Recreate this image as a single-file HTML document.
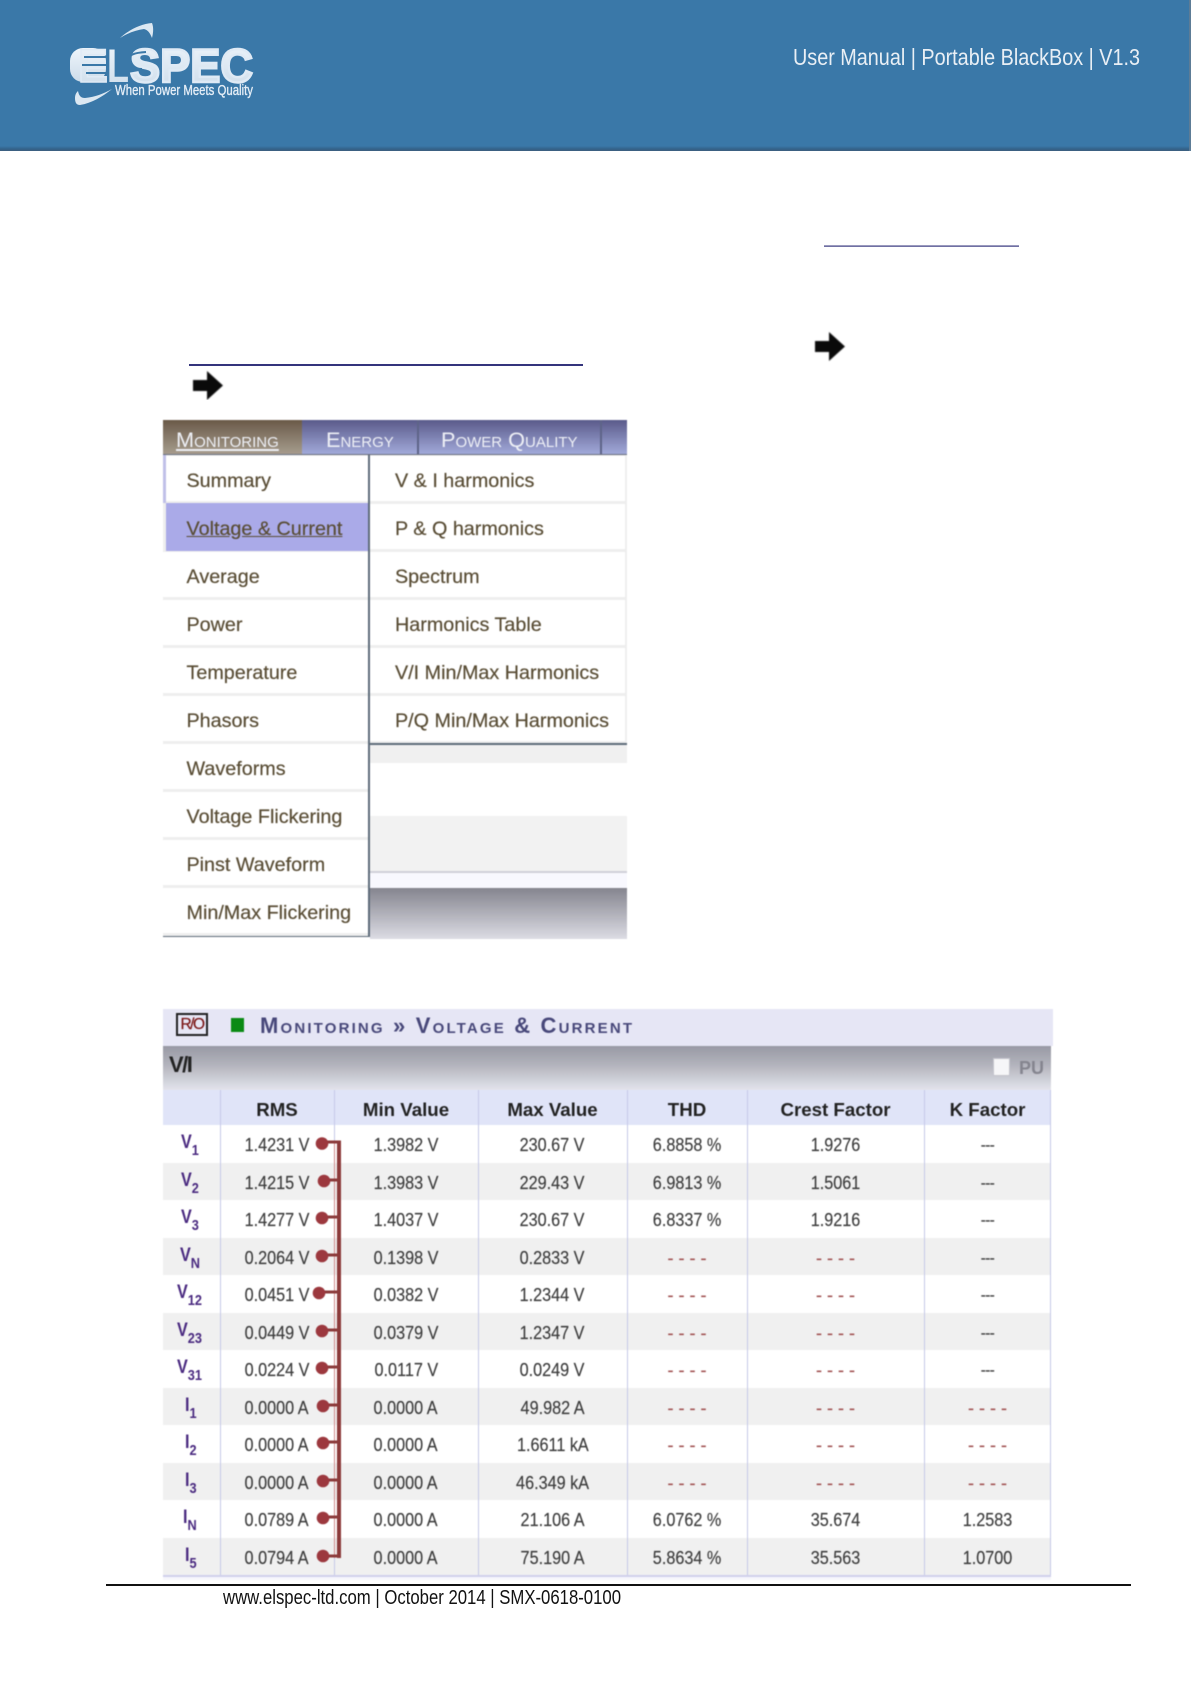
<!DOCTYPE html>
<html><head><meta charset="utf-8"><title>Elspec User Manual</title>
<style>
html,body{margin:0;padding:0;background:#fff}
#p{position:relative;width:1191px;height:1684px;overflow:hidden;background:#fff;font-family:"Liberation Sans",sans-serif}
.a{position:absolute}
svg{position:absolute;left:0;top:0}
#menu{position:absolute;left:0;top:0;width:1191px;height:960px;filter:blur(.55px)}
.tab{position:absolute;top:420px;height:35px;line-height:40px;font-size:21.7px;font-variant:small-caps;color:#eef0f6;white-space:nowrap}
.m{position:absolute;height:45px;line-height:50px;font-size:19.75px;color:#594d35;-webkit-text-stroke:.2px #594d35;background:#fff;white-space:nowrap;box-sizing:border-box;border-bottom:0}
.l{left:163px;width:205px;padding-left:23.5px}
.s{left:370px;width:255px;padding-left:25px}
#tbl{position:absolute;left:0;top:0;width:1191px;height:1582px;filter:blur(.5px)}
.r{position:absolute;left:163px;width:888px;height:37.5px;display:flex;line-height:41px;font-size:18px;color:#3c3c3c;-webkit-text-stroke:.15px #3c3c3c}
.r.e{background:#f0f0f0}
.r>div{text-align:center;flex:none;white-space:nowrap}
.r>div:nth-child(1){width:57px}
.r>div:nth-child(2){width:114px}
.r>div:nth-child(3){width:144px}
.r>div:nth-child(4){width:149px}
.r>div:nth-child(5){width:120px}
.r>div:nth-child(6){width:177px}
.r>div:nth-child(7){width:127px}
.r span{display:inline-block;transform:scaleX(.9)}
.r .n{font-weight:bold;font-size:19px;color:#4a2a80;-webkit-text-stroke:0;line-height:36px}
.r .n em{display:inline-block;font-style:normal;transform:scaleX(.85);transform-origin:0 50%}
.r .n sub{font-size:15px;line-height:0;vertical-align:-7px}
.d{color:#a05050;-webkit-text-stroke:.15px #a05050;font-size:18px;line-height:41px}
.k{font-size:15px;letter-spacing:-.5px;line-height:42px;color:#333}
.h{position:absolute;left:163px;top:1090px;width:888px;height:35px;display:flex;background:#e0e4f8;font-weight:bold;font-size:18.7px;line-height:39px;color:#222}
.h>div{text-align:center;flex:none}
.h>div:nth-child(1){width:57px}.h>div:nth-child(2){width:114px}.h>div:nth-child(3){width:144px}.h>div:nth-child(4){width:149px}.h>div:nth-child(5){width:120px}.h>div:nth-child(6){width:177px}.h>div:nth-child(7){width:127px}
.v{position:absolute;top:1090px;width:1.2px;height:486px;background:#c6c8e8}
</style></head><body>
<div id="p">

<!-- Header -->
<div class="a" style="left:0;top:0;width:1191px;height:151px;background:linear-gradient(#3a78a8 0,#3a78a8 146px,#33628a 149px,#3d5f7e 151px)"></div>
<div class="a" style="left:1189px;top:0;width:2px;height:151px;background:#5d7c96"></div>
<svg width="1191" height="400" viewBox="0 0 1191 400">
 <defs><linearGradient id="lg" x1="0" y1="0" x2="0" y2="1"><stop offset="0" stop-color="#eef5fb"/><stop offset="1" stop-color="#cddcea"/></linearGradient></defs>
 <path d="M120 38C130 29 141 24 152 23C154 28 153 34 152 38C150 33 148 30 144 29C136 30 128 33 120 38Z" fill="#dce8f2"/>
 <path d="M112 89C102 97 92 103 80 105C76 105 75 102 75 98C75 95 76 93 78 91C79 96 81 98 85 98C95 97 103 94 112 89Z" fill="#dce8f2"/>
 <rect x="70" y="48" width="36" height="34" rx="13" fill="url(#lg)"/>
 <text x="78" y="82" font-family="Liberation Sans" font-weight="bold" font-size="47" fill="url(#lg)" stroke="#dfeaf5" stroke-width="1.5" textLength="30" lengthAdjust="spacingAndGlyphs">E</text>
 <text x="107" y="82" font-family="Liberation Sans" font-weight="bold" font-size="47" fill="url(#lg)" textLength="22" lengthAdjust="spacingAndGlyphs">L</text>
 <text x="130" y="82" font-family="Liberation Sans" font-weight="bold" font-size="47" fill="url(#lg)" stroke="#dfeaf5" stroke-width="2.4" textLength="123" lengthAdjust="spacingAndGlyphs">SPEC</text>
 <path d="M84 57H108M82 65H108M86 73H108" stroke="#3a78a8" stroke-width="2" fill="none"/>
 <path d="M128 60Q128 53 146 52M128 62Q130 69 142 69" stroke="#3a78a8" stroke-width="2" fill="none"/>
 <text x="115" y="95" font-family="Liberation Sans" font-size="14.5" fill="#e4edf6" stroke="#e4edf6" stroke-width=".35" textLength="138" lengthAdjust="spacingAndGlyphs">When Power Meets Quality</text>
 <text x="793" y="65" font-family="Liberation Sans" font-size="23" fill="#e9eff5" textLength="347" lengthAdjust="spacingAndGlyphs">User Manual | Portable BlackBox | V1.3</text>
 <rect x="824" y="245.5" width="195" height="1.2" fill="#34347c"/>
 <rect x="189" y="364" width="394" height="2" fill="#34347c"/>
 <g style="filter:blur(.7px)">
  <path d="M815 341H829V332L845 346.500L829 361V352H815Z" fill="#0a0a0a"/>
  <path d="M193 380H207V371L223 385.500L207 400V391H193Z" fill="#0a0a0a"/>
 </g>
</svg>

<!-- Menu -->
<div id="menu">
 <div class="a" style="left:163px;top:420px;width:464px;height:35px;background:linear-gradient(#5a5a8a,#a4acdc)"></div>
 <div class="a" style="left:163px;top:420px;width:139px;height:35px;background:linear-gradient(#6a5a48,#a89e90)"></div>
 <div class="a" style="left:417px;top:420px;width:1.5px;height:35px;background:#5e6488"></div>
 <div class="a" style="left:600px;top:420px;width:1.5px;height:35px;background:#5e6488"></div>
 <div class="a" style="left:163px;top:454px;width:464px;height:1.5px;background:#6a7080"></div>
 <div class="tab" style="left:176px;text-decoration:underline">Monitoring</div>
 <div class="tab" style="left:326px">Energy</div>
 <div class="tab" style="left:441px">Power Quality</div>

 <!-- background of right part -->
 <div class="a" style="left:370px;top:455px;width:257px;height:289px;background:#eee"></div>
 <div class="a" style="left:370px;top:744px;width:257px;height:19px;background:#f0f0f0"></div>
 <div class="a" style="left:370px;top:816px;width:257px;height:55px;background:#f2f2f2"></div>
 <div class="a" style="left:370px;top:871px;width:257px;height:1.5px;background:#d0d0d8"></div>
 <div class="a" style="left:370px;top:873px;width:257px;height:15px;background:#f8f8fe"></div>
 <div class="a" style="left:370px;top:888px;width:257px;height:51px;background:linear-gradient(#85858f,#dcdce4)"></div>
 <!-- left column bg -->
 <div class="a" style="left:163px;top:455px;width:205px;height:481px;background:#eee"></div>
 <div class="a" style="left:163px;top:455px;width:3px;height:48px;background:#c0c0e8"></div>

 <div class="m l" style="top:456px;left:166px;width:202px;padding-left:20.500px">Summary</div>
 <div class="m l" style="top:503px;left:166px;width:202px;height:48px;padding-left:20.500px;line-height:52px;background:#aaaae8;text-decoration:underline">Voltage &amp; Current</div>
 <div class="m l" style="top:552px">Average</div>
 <div class="m l" style="top:600px">Power</div>
 <div class="m l" style="top:648px">Temperature</div>
 <div class="m l" style="top:696px">Phasors</div>
 <div class="m l" style="top:744px">Waveforms</div>
 <div class="m l" style="top:792px">Voltage Flickering</div>
 <div class="m l" style="top:840px">Pinst Waveform</div>
 <div class="m l" style="top:888px">Min/Max Flickering</div>

 <div class="m s" style="top:456px">V &amp; I harmonics</div>
 <div class="m s" style="top:504px">P &amp; Q harmonics</div>
 <div class="m s" style="top:552px">Spectrum</div>
 <div class="m s" style="top:600px">Harmonics Table</div>
 <div class="m s" style="top:648px">V/I Min/Max Harmonics</div>
 <div class="m s" style="top:696px">P/Q Min/Max Harmonics</div>

 <div class="a" style="left:368px;top:455px;width:2px;height:482px;background:#5e6c7a"></div>
 <div class="a" style="left:163px;top:935.500px;width:207px;height:1.500px;background:#5e6c7a"></div>
 <div class="a" style="left:370px;top:743px;width:257px;height:2px;background:#5e6c7a"></div>
</div>

<!-- Table -->
<div id="tbl">
 <div class="a" style="left:163px;top:1009px;width:890px;height:37px;background:#e6e6f5"></div>
 <div class="a" style="left:176px;top:1013px;width:28px;height:19px;border:2px solid #222;text-align:center;line-height:19px;font-size:15.5px;letter-spacing:-1.5px;color:#7a1414;-webkit-text-stroke:.2px #7a1414">R/O</div>
 <div class="a" style="left:231px;top:1018px;width:12.500px;height:14px;background:#0a8a14"></div>
 <svg width="1191" height="1100" viewBox="0 0 1191 1100"><text x="260" y="1033" font-family="Liberation Sans" font-weight="bold" font-size="22" fill="#48487a" style="font-variant:small-caps" textLength="372" lengthAdjust="spacing">Monitoring » Voltage &amp; Current</text></svg>
 <div class="a" style="left:163px;top:1046px;width:888px;height:44px;background:linear-gradient(#9899a4,#b4b5be 45%,#e4e4ec)"></div>
 <div class="a" style="left:169px;top:1052px;font-weight:bold;font-size:22px;letter-spacing:-1.5px;line-height:26px;color:#222">V/I</div>
 <div class="a" style="left:993px;top:1058px;width:15px;height:16px;background:#f6f6f8;border:.5px solid #c4c4cc"></div>
 <div class="a" style="left:1019px;top:1057px;font-weight:bold;font-size:18px;line-height:22px;color:#85858f">PU</div>

 <div class="h"><div></div><div>RMS</div><div>Min Value</div><div>Max Value</div><div>THD</div><div>Crest Factor</div><div>K Factor</div></div>

 <div class="r" style="top:1125px"><div class="n"><em>V<sub>1</sub></em></div><div><span>1.4231 V</span></div><div><span>1.3982 V</span></div><div><span>230.67 V</span></div><div><span>6.8858 %</span></div><div><span>1.9276</span></div><div class="k">---</div></div>
 <div class="r e" style="top:1162.500px"><div class="n"><em>V<sub>2</sub></em></div><div><span>1.4215 V</span></div><div><span>1.3983 V</span></div><div><span>229.43 V</span></div><div><span>6.9813 %</span></div><div><span>1.5061</span></div><div class="k">---</div></div>
 <div class="r" style="top:1200px"><div class="n"><em>V<sub>3</sub></em></div><div><span>1.4277 V</span></div><div><span>1.4037 V</span></div><div><span>230.67 V</span></div><div><span>6.8337 %</span></div><div><span>1.9216</span></div><div class="k">---</div></div>
 <div class="r e" style="top:1237.500px"><div class="n"><em>V<sub>N</sub></em></div><div><span>0.2064 V</span></div><div><span>0.1398 V</span></div><div><span>0.2833 V</span></div><div class="d">- - - -</div><div class="d">- - - -</div><div class="k">---</div></div>
 <div class="r" style="top:1275px"><div class="n"><em>V<sub>12</sub></em></div><div><span>0.0451 V</span></div><div><span>0.0382 V</span></div><div><span>1.2344 V</span></div><div class="d">- - - -</div><div class="d">- - - -</div><div class="k">---</div></div>
 <div class="r e" style="top:1312.500px"><div class="n"><em>V<sub>23</sub></em></div><div><span>0.0449 V</span></div><div><span>0.0379 V</span></div><div><span>1.2347 V</span></div><div class="d">- - - -</div><div class="d">- - - -</div><div class="k">---</div></div>
 <div class="r" style="top:1350px"><div class="n"><em>V<sub>31</sub></em></div><div><span>0.0224 V</span></div><div><span>0.0117 V</span></div><div><span>0.0249 V</span></div><div class="d">- - - -</div><div class="d">- - - -</div><div class="k">---</div></div>
 <div class="r e" style="top:1387.500px"><div class="n"><em>I<sub>1</sub></em></div><div><span>0.0000 A</span></div><div><span>0.0000 A</span></div><div><span>49.982 A</span></div><div class="d">- - - -</div><div class="d">- - - -</div><div class="d">- - - -</div></div>
 <div class="r" style="top:1425px"><div class="n"><em>I<sub>2</sub></em></div><div><span>0.0000 A</span></div><div><span>0.0000 A</span></div><div><span>1.6611 kA</span></div><div class="d">- - - -</div><div class="d">- - - -</div><div class="d">- - - -</div></div>
 <div class="r e" style="top:1462.500px"><div class="n"><em>I<sub>3</sub></em></div><div><span>0.0000 A</span></div><div><span>0.0000 A</span></div><div><span>46.349 kA</span></div><div class="d">- - - -</div><div class="d">- - - -</div><div class="d">- - - -</div></div>
 <div class="r" style="top:1500px"><div class="n"><em>I<sub>N</sub></em></div><div><span>0.0789 A</span></div><div><span>0.0000 A</span></div><div><span>21.106 A</span></div><div><span>6.0762 %</span></div><div><span>35.674</span></div><div><span>1.2583</span></div></div>
 <div class="r e" style="top:1537.500px"><div class="n"><em>I<sub>5</sub></em></div><div><span>0.0794 A</span></div><div><span>0.0000 A</span></div><div><span>75.190 A</span></div><div><span>5.8634 %</span></div><div><span>35.563</span></div><div><span>1.0700</span></div></div>

 <div class="v" style="left:220px"></div><div class="v" style="left:333.500px"></div><div class="v" style="left:477.500px"></div><div class="v" style="left:627px"></div><div class="v" style="left:746.500px"></div><div class="v" style="left:924px"></div><div class="v" style="left:1050px"></div>
 <div class="a" style="left:163px;top:1575px;width:888px;height:2px;background:#d0d0ec"></div>
 <div class="a" style="left:163px;top:1577px;width:888px;height:3px;background:#f6f6fc"></div>

 <svg width="1191" height="1600" viewBox="0 0 1191 1600">
  <rect x="334" y="1141" width="1" height="417" fill="#d08a8a"/>
  <rect x="337" y="1142" width="4" height="416" fill="#8c3a3a"/>
  <g stroke="#8c3a3a" stroke-width="3" fill="none">
   <path d="M325 1142H341M325 1180H340M325 1217H340M325 1255H340M322 1292H340M325 1330H340M325 1367H340M325 1405H340M325 1442H340M325 1480H340M325 1517H340M325 1556H341"/>
  </g>
  <g fill="#9c383e">
   <circle cx="322" cy="1143.500" r="6.300"/><circle cx="324" cy="1181" r="6.300"/><circle cx="322" cy="1218" r="6.300"/><circle cx="322" cy="1256" r="6.300"/><circle cx="319" cy="1293" r="6.300"/><circle cx="322" cy="1331" r="6.300"/><circle cx="322" cy="1368" r="6.300"/><circle cx="323" cy="1406" r="6.300"/><circle cx="323" cy="1443" r="6.300"/><circle cx="323" cy="1481" r="6.300"/><circle cx="323" cy="1518" r="6.300"/><circle cx="323" cy="1556" r="6.300"/>
  </g>
 </svg>
</div>

<!-- Footer -->
<div class="a" style="left:106px;top:1584px;width:1025px;height:2px;background:#111"></div>
<svg width="1191" height="1684" viewBox="0 0 1191 1684"><text x="223" y="1604" font-family="Liberation Sans" font-size="20" fill="#111" textLength="398" lengthAdjust="spacingAndGlyphs">www.elspec-ltd.com | October 2014 | SMX-0618-0100</text></svg>

</div>
</body></html>
